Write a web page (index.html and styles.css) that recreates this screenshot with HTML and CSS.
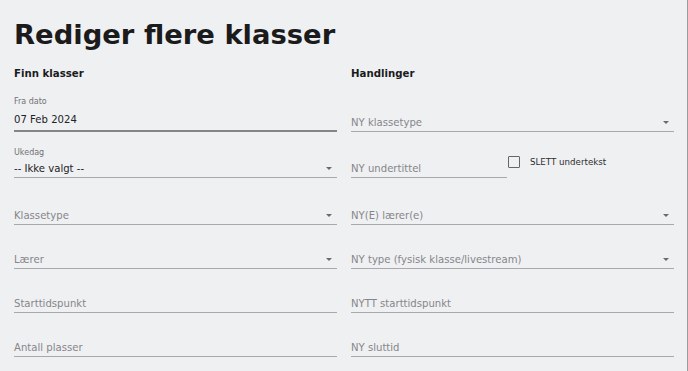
FILE: index.html
```html
<!DOCTYPE html>
<html lang="no">
<head>
<meta charset="utf-8">
<title>Rediger flere klasser</title>
<link rel="stylesheet" href="styles.css">
</head>
<body>
<div class="page">
  <h1 class="title">Rediger flere klasser</h1>
  <div class="grid">
    <h2 class="section">Finn klasser</h2>
    <h2 class="section">Handlinger</h2>

    <div class="field field-date">
      <div class="label label-date">Fra dato</div>
      <div class="control"><span class="value value-date">07 Feb 2024</span></div>
    </div>
    <div class="field">
      <div class="control"><span class="placeholder">NY klassetype</span><span class="arrow"></span></div>
    </div>

    <div class="field">
      <div class="label label-select">Ukedag</div>
      <div class="control"><span class="value">-- Ikke valgt --</span><span class="arrow"></span></div>
    </div>
    <div class="split">
      <div class="field field-short">
        <div class="control"><span class="placeholder">NY undertittel</span></div>
      </div>
      <label class="check">
        <span class="box"></span>
        <span class="check-text">SLETT undertekst</span>
      </label>
    </div>

    <div class="field">
      <div class="control"><span class="placeholder">Klassetype</span><span class="arrow"></span></div>
    </div>
    <div class="field">
      <div class="control"><span class="placeholder">NY(E) lærer(e)</span><span class="arrow"></span></div>
    </div>

    <div class="field">
      <div class="control"><span class="placeholder">Lærer</span><span class="arrow"></span></div>
    </div>
    <div class="field">
      <div class="control"><span class="placeholder">NY type (fysisk klasse/livestream)</span><span class="arrow"></span></div>
    </div>

    <div class="field">
      <div class="control"><span class="placeholder">Starttidspunkt</span></div>
    </div>
    <div class="field">
      <div class="control"><span class="placeholder">NYTT starttidspunkt</span></div>
    </div>

    <div class="field">
      <div class="control"><span class="placeholder">Antall plasser</span></div>
    </div>
    <div class="field">
      <div class="control"><span class="placeholder">NY sluttid</span></div>
    </div>
  </div>
</div>
</body>
</html>
```

FILE: styles.css
```css
html, body {
  margin: 0;
  padding: 0;
  background: #eff0f2;
}

body {
  font-family: "DejaVu Sans", "Noto Sans", sans-serif;
  color: #222;
}

.page {
  box-sizing: border-box;
  width: 100%;
  min-height: 100vh;
  padding: 17px 14px 0 14px;
  border-right: 1px solid #9c9c9f;
}

.title {
  margin: 0;
  font-size: 27.4px;
  line-height: 36px;
  font-weight: 700;
  color: #1b1b1c;
}

.grid {
  margin-top: 13px;
  display: grid;
  grid-template-columns: 323px 323px;
  column-gap: 14px;
  grid-template-rows: 16px 50px 46px 47px 44px 44px 44px;
}

.section {
  margin: 0;
  font-size: 10.2px;
  line-height: 16px;
  font-weight: 700;
  color: #1b1b1c;
}

.field {
  align-self: end;
  display: flex;
  flex-direction: column;
  border-bottom: 1px solid #a9a9ad;
}

.field-date {
  border-bottom: 2px solid #858589;
}

.label {
  font-size: 8px;
  line-height: 12px;
  color: #707074;
}

.label-date {
  margin-bottom: 5px;
}

.label-select {
  margin-bottom: 2px;
}

.control {
  display: flex;
  align-items: center;
  height: 15px;
  padding-bottom: 1px;
}

.field-date .control {
  height: 14px;
  padding-bottom: 3px;
}

.value,
.placeholder {
  flex: 1;
  font-size: 10.1px;
  line-height: 14px;
  white-space: nowrap;
}

.value {
  color: #232325;
}

.placeholder {
  color: #86868a;
}

.arrow {
  width: 0;
  height: 0;
  margin-right: 5px;
  border-left: 3.5px solid transparent;
  border-right: 3.5px solid transparent;
  border-top: 3.5px solid #6a6a6e;
}

.split {
  align-self: end;
  display: flex;
  align-items: flex-end;
}

.field-short {
  width: 156px;
  flex: none;
}

.check {
  display: flex;
  align-items: center;
  margin-left: 1px;
  margin-bottom: 10px;
  height: 12px;
}

.box {
  box-sizing: border-box;
  width: 12px;
  height: 12px;
  border: 1.5px solid #66666a;
  border-radius: 1px;
}

.check-text {
  margin-left: 10px;
  font-size: 8.7px;
  line-height: 12px;
  color: #2e2e30;
}
```
